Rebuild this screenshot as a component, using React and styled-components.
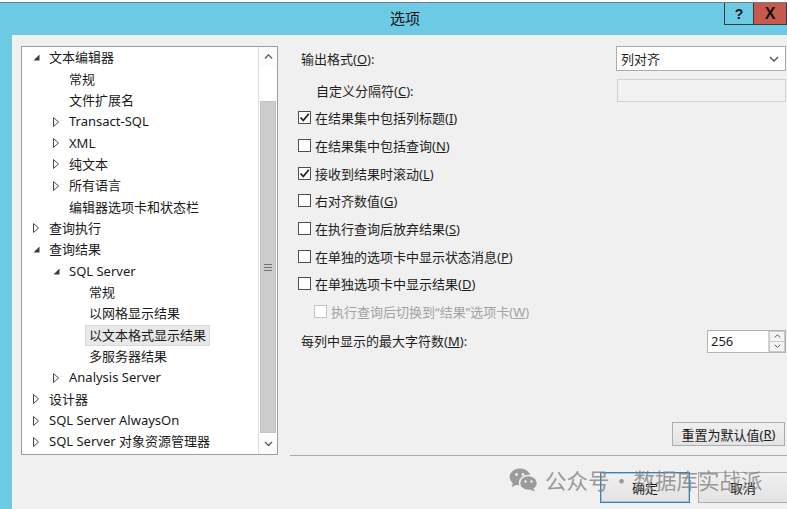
import React from "react";
import styled, { createGlobalStyle } from "styled-components";

const GlobalStyle = createGlobalStyle`
  html, body {
    margin: 0;
    padding: 0;
    background: #ffffff;
  }
  body {
    font-family: "Noto Sans", "Noto Sans CJK SC", sans-serif;
    font-size: 13px;
    color: #1e1e1e;
  }
`;

const FRAME = "#6ccae5";

const Window = styled.div`
  position: relative;
  width: 787px;
  height: 507px;
  margin-top: 2px;
  border-top: 1px solid #6d7f86;
  box-sizing: border-box;
  display: flex;
  flex-direction: column;
  overflow: hidden;
`;

const TitleBar = styled.div`
  height: 32px;
  flex: none;
  background: ${FRAME};
  display: flex;
  align-items: flex-start;
`;

const Title = styled.div`
  flex: 1;
  text-align: center;
  padding-left: 86px;
  padding-top: 5px;
  font-size: 15px;
  line-height: 20px;
  color: #111;
`;

const CaptionButton = styled.div`
  width: ${(p) => p.$w}px;
  height: 22px;
  box-sizing: border-box;
  border: 1px solid #3a3a3a;
  border-top: none;
  background: ${(p) => (p.$close ? "#c75a4f" : FRAME)};
  display: flex;
  align-items: center;
  justify-content: center;
  font-family: "Liberation Sans", sans-serif;
  font-weight: bold;
  font-size: ${(p) => (p.$close ? 16 : 14)}px;
  color: #111;
  & + & {
    border-left: none;
  }
`;

const Body = styled.div`
  flex: 1;
  display: flex;
  flex-direction: column;
  border-left: 12px solid ${FRAME};
  background: #f0f0f0;
`;

const MainRow = styled.div`
  height: 420px;
  display: flex;
`;

const TreeBox = styled.div`
  width: 257px;
  height: 409px;
  margin: 11px 0 0 9px;
  box-sizing: border-box;
  border: 1px solid #9c9c9c;
  background: #ffffff;
  display: flex;
`;

const TreeList = styled.div`
  flex: 1;
`;

const TreeRow = styled.div`
  height: 21.35px;
  display: flex;
  align-items: center;
  padding-left: ${(p) => 10 + p.$level * 20}px;
  white-space: nowrap;
`;

const Arrow = styled.span`
  width: 16px;
  flex: none;
  display: flex;
  align-items: center;
  justify-content: flex-start;
  padding-left: 1px;
  margin-right: -1px;
`;

const TreeLabel = styled.span`
  line-height: 19px;
  padding: 0 3px;
  margin-left: -3px;
  border: 1px solid ${(p) => (p.$selected ? "#d9d9d9" : "transparent")};
  background: ${(p) => (p.$selected ? "#e8e8e8" : "transparent")};
  color: #1a1a1a;
`;

const ScrollBar = styled.div`
  width: 18px;
  flex: none;
  border-left: 1px solid #dcdcdc;
  background: #f0f0f0;
  display: flex;
  flex-direction: column;
`;

const ScrollArrow = styled.div`
  height: 20px;
  flex: none;
  background: #fbfbfb;
  display: flex;
  align-items: center;
  justify-content: center;
`;

const ScrollTrack = styled.div`
  flex: 1;
  display: flex;
  flex-direction: column;
  padding: 34px 1px 1px 1px;
  background: #ffffff;
`;

const ScrollThumb = styled.div`
  flex: 1;
  background: #cdcdcd;
  border: 1px solid #c2c2c2;
  display: flex;
  align-items: center;
  justify-content: center;
`;

const RightPanel = styled.div`
  flex: 1;
  display: flex;
  flex-direction: column;
  padding: 11px 1px 9px 20px;
`;

const FieldRow = styled.div`
  height: ${(p) => p.$h}px;
  margin-top: ${(p) => p.$mt || 0}px;
  display: flex;
  align-items: center;
  justify-content: space-between;
`;

const FieldLabel = styled.span`
  padding-left: ${(p) => p.$indent || 3}px;
  line-height: 18px;
`;

const Select = styled.div`
  width: 170px;
  height: 25px;
  box-sizing: border-box;
  border: 1px solid #acacac;
  background: #ffffff;
  display: flex;
  align-items: center;
  justify-content: space-between;
  padding: 0 6px 0 4px;
`;

const TextBox = styled.div`
  width: ${(p) => p.$w}px;
  height: 23px;
  box-sizing: border-box;
  border: 1px solid ${(p) => (p.$disabled ? "#d2d2d2" : "#acacac")};
  background: ${(p) => (p.$disabled ? "#f2f2f2" : "#ffffff")};
`;

const CheckList = styled.div`
  margin-top: 2px;
  display: flex;
  flex-direction: column;
`;

const CheckRow = styled.label`
  height: 27.7px;
  display: flex;
  align-items: center;
  padding-left: ${(p) => (p.$indent ? 16 : 0)}px;
  color: ${(p) => (p.$disabled ? "#a3a3a3" : "#1e1e1e")};
  white-space: nowrap;
`;

const Box = styled.span`
  width: 13px;
  height: 13px;
  box-sizing: border-box;
  border: 1px solid ${(p) => (p.$disabled ? "#c4c4c4" : "#4f4f4f")};
  background: #ffffff;
  margin-right: 4px;
  display: flex;
  align-items: center;
  justify-content: center;
`;

const SpinInput = styled.div`
  width: 79px;
  height: 23px;
  box-sizing: border-box;
  border: 1px solid #b4b4b4;
  background: #ffffff;
  display: flex;
`;

const SpinValue = styled.span`
  flex: 1;
  padding-left: 3px;
  line-height: 21px;
`;

const SpinButtons = styled.div`
  width: 16px;
  display: flex;
  flex-direction: column;
  border-left: 1px solid #d6d6d6;
`;

const SpinButton = styled.div`
  flex: 1;
  background: #f4f4f4;
  border: 1px solid #c9c9c9;
  display: flex;
  align-items: center;
  justify-content: center;
  & + & {
    border-top: none;
  }
`;

const Spacer = styled.div`
  flex: 1;
`;

const Button = styled.div`
  width: ${(p) => p.$w}px;
  height: ${(p) => p.$h}px;
  box-sizing: border-box;
  border: 1px solid ${(p) => (p.$default ? "#3c7fb1" : "#adadad")};
  box-shadow: ${(p) => (p.$default ? "inset 0 0 0 1px #9ec6e6" : "none")};
  background: linear-gradient(#f0f0f0, #e3e3e3);
  display: flex;
  align-items: center;
  justify-content: center;
  color: #1a1a1a;
`;

const ResetRow = styled.div`
  display: flex;
  justify-content: flex-end;
  padding-right: 1px;
`;

const Footer = styled.div`
  flex: 1;
  margin-left: 278px;
  border-top: 1px solid #a9a9a9;
  display: flex;
  justify-content: flex-end;
  align-items: flex-start;
  gap: 8px;
  padding-top: 16px;
  margin-right: -1px;
`;

const Watermark = styled.div`
  position: absolute;
  left: 509px;
  top: 463px;
  display: flex;
  align-items: center;
  gap: 7px;
  color: rgba(128, 128, 128, 0.78);
  font-family: "Noto Sans CJK SC", sans-serif;
  font-size: 21.5px;
  line-height: 28px;
  pointer-events: none;
  white-space: nowrap;
`;

const Dot = styled.span`
  display: inline-block;
  width: 24px;
  text-align: center;
`;

const Expanded = () => (
  <svg width="7" height="7" viewBox="0 0 7 7">
    <path d="M6.5 0.5 L6.5 6.5 L0.5 6.5 Z" fill="#3c3c3c" />
  </svg>
);

const Collapsed = () => (
  <svg width="6" height="10" viewBox="0 0 6 10">
    <path d="M0.5 0.5 L5.5 5 L0.5 9.5 Z" fill="none" stroke="#4a4a4a" strokeWidth="1" />
  </svg>
);

const Chevron = ({ up, size = 9 }) => (
  <svg width={size} height={size * 0.6} viewBox="0 0 10 6">
    <path
      d={up ? "M1 5 L5 1 L9 5" : "M1 1 L5 5 L9 1"}
      fill="none"
      stroke="#555"
      strokeWidth="1.4"
    />
  </svg>
);

const Check = () => (
  <svg width="11" height="11" viewBox="0 0 11 11">
    <path d="M1.5 5.5 L4.3 8.5 L9.8 1.8" fill="none" stroke="#222" strokeWidth="1.8" />
  </svg>
);

const Gripper = () => (
  <svg width="8" height="7" viewBox="0 0 8 7">
    <path d="M0 0.5 H8 M0 3.5 H8 M0 6.5 H8" stroke="#707070" strokeWidth="1" />
  </svg>
);

const WeChat = () => (
  <svg width="29" height="24" viewBox="0 0 29 24">
    <ellipse cx="11" cy="9" rx="10.5" ry="8.5" fill="#9b9b9b" />
    <path d="M4 14 L3 19 L9 16 Z" fill="#9b9b9b" />
    <circle cx="7.5" cy="6.5" r="1.4" fill="#f0f0f0" />
    <circle cx="14" cy="6.5" r="1.4" fill="#f0f0f0" />
    <ellipse cx="19.5" cy="15" rx="9" ry="7.5" fill="#9b9b9b" stroke="#f0f0f0" strokeWidth="1.5" />
    <path d="M24 20 L26 23.5 L20.5 21.5 Z" fill="#9b9b9b" />
    <circle cx="16.5" cy="13.5" r="1.2" fill="#f0f0f0" />
    <circle cx="22.5" cy="13.5" r="1.2" fill="#f0f0f0" />
  </svg>
);

const tree = [
  { level: 0, arrow: "open", label: "文本编辑器" },
  { level: 1, label: "常规" },
  { level: 1, label: "文件扩展名" },
  { level: 1, arrow: "closed", label: "Transact-SQL" },
  { level: 1, arrow: "closed", label: "XML" },
  { level: 1, arrow: "closed", label: "纯文本" },
  { level: 1, arrow: "closed", label: "所有语言" },
  { level: 1, label: "编辑器选项卡和状态栏" },
  { level: 0, arrow: "closed", label: "查询执行" },
  { level: 0, arrow: "open", label: "查询结果" },
  { level: 1, arrow: "open", label: "SQL Server" },
  { level: 2, label: "常规" },
  { level: 2, label: "以网格显示结果" },
  { level: 2, label: "以文本格式显示结果", selected: true },
  { level: 2, label: "多服务器结果" },
  { level: 1, arrow: "closed", label: "Analysis Server" },
  { level: 0, arrow: "closed", label: "设计器" },
  { level: 0, arrow: "closed", label: "SQL Server AlwaysOn" },
  { level: 0, arrow: "closed", label: "SQL Server 对象资源管理器" },
];

const checks = [
  { text: "在结果集中包括列标题", key: "I", checked: true },
  { text: "在结果集中包括查询", key: "N" },
  { text: "接收到结果时滚动", key: "L", checked: true },
  { text: "右对齐数值", key: "G" },
  { text: "在执行查询后放弃结果", key: "S" },
  { text: "在单独的选项卡中显示状态消息", key: "P" },
  { text: "在单独选项卡中显示结果", key: "D" },
  { text: "执行查询后切换到“结果”选项卡", key: "W", disabled: true, indent: true },
];

const Mnemonic = ({ k }) => (
  <>
    (<u>{k}</u>)
  </>
);

export default function App() {
  return (
    <>
      <GlobalStyle />
      <Window>
        <TitleBar>
          <Title>选项</Title>
          <CaptionButton $w={30}>?</CaptionButton>
          <CaptionButton $w={33} $close>
            X
          </CaptionButton>
        </TitleBar>
        <Body>
          <MainRow>
            <TreeBox>
              <TreeList>
                {tree.map((n, i) => (
                  <TreeRow key={i} $level={n.level}>
                    <Arrow>
                      {n.arrow === "open" && <Expanded />}
                      {n.arrow === "closed" && <Collapsed />}
                    </Arrow>
                    <TreeLabel $selected={n.selected}>{n.label}</TreeLabel>
                  </TreeRow>
                ))}
              </TreeList>
              <ScrollBar>
                <ScrollArrow>
                  <Chevron up />
                </ScrollArrow>
                <ScrollTrack>
                  <ScrollThumb>
                    <Gripper />
                  </ScrollThumb>
                </ScrollTrack>
                <ScrollArrow>
                  <Chevron />
                </ScrollArrow>
              </ScrollBar>
            </TreeBox>
            <RightPanel>
              <FieldRow $h={25}>
                <FieldLabel>
                  输出格式<Mnemonic k="O" />:
                </FieldLabel>
                <Select>
                  <span>列对齐</span>
                  <Chevron size={10} />
                </Select>
              </FieldRow>
              <FieldRow $h={23} $mt={8}>
                <FieldLabel $indent={18}>
                  自定义分隔符<Mnemonic k="C" />:
                </FieldLabel>
                <TextBox $w={169} $disabled />
              </FieldRow>
              <CheckList>
                {checks.map((c) => (
                  <CheckRow key={c.key} $disabled={c.disabled} $indent={c.indent}>
                    <Box $disabled={c.disabled}>{c.checked && <Check />}</Box>
                    <span>
                      {c.text}
                      <Mnemonic k={c.key} />
                    </span>
                  </CheckRow>
                ))}
              </CheckList>
              <FieldRow $h={23} $mt={4}>
                <FieldLabel>
                  每列中显示的最大字符数<Mnemonic k="M" />:
                </FieldLabel>
                <SpinInput>
                  <SpinValue>256</SpinValue>
                  <SpinButtons>
                    <SpinButton>
                      <Chevron up size={7} />
                    </SpinButton>
                    <SpinButton>
                      <Chevron size={7} />
                    </SpinButton>
                  </SpinButtons>
                </SpinInput>
              </FieldRow>
              <Spacer />
              <ResetRow>
                <Button $w={113} $h={24}>
                  重置为默认值<Mnemonic k="R" />
                </Button>
              </ResetRow>
            </RightPanel>
          </MainRow>
          <Footer>
            <Button $w={90} $h={31} $default>
              确定
            </Button>
            <Button $w={90} $h={31}>
              取消
            </Button>
          </Footer>
        </Body>
        <Watermark>
          <WeChat />
          <span>
            公众号<Dot>·</Dot>数据库实战派
          </span>
        </Watermark>
      </Window>
    </>
  );
}
